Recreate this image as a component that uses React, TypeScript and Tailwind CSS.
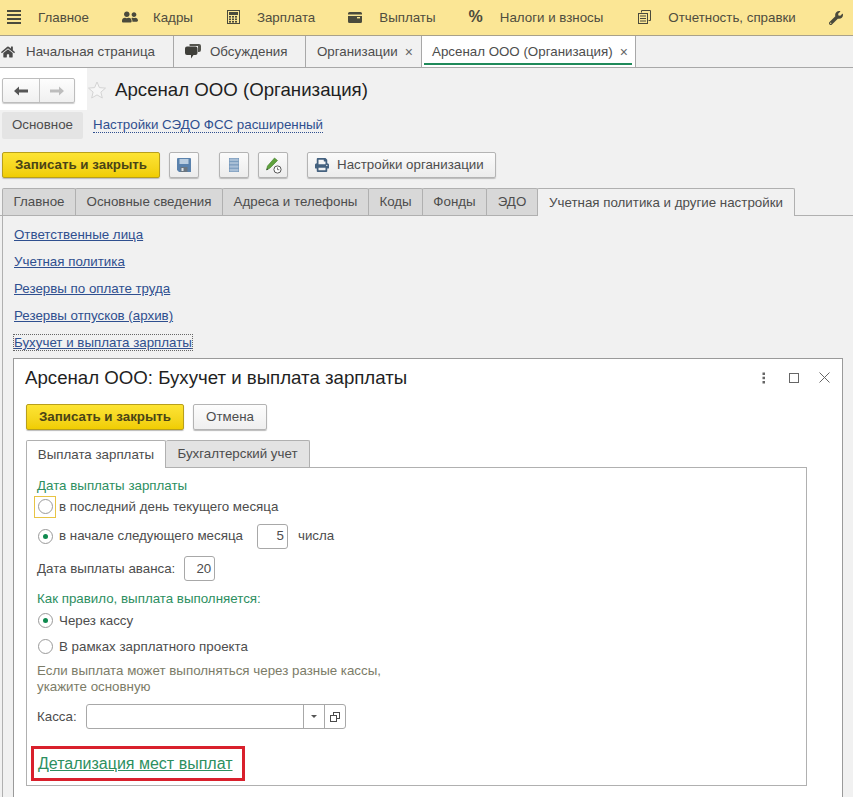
import { FaHome, FaPrint, FaUserFriends, FaWrench } from 'react-icons/fa';
import type { ReactNode } from 'react';

const MenuIcon = () => (
    <svg width="14" height="14" viewBox="0 0 14 14" fill="#4a4a3c">
        <rect x="0" y="0" width="14" height="2" />
        <rect x="0" y="4" width="14" height="2" />
        <rect x="0" y="8" width="14" height="2" />
        <rect x="0" y="12" width="14" height="2" />
    </svg>
);

const CalcIcon = () => (
    <svg width="13" height="14" viewBox="0 0 13 14">
        <rect x="0.5" y="0.5" width="12" height="13" fill="none" stroke="#4a4a3c" />
        <rect x="2" y="2" width="9" height="3" fill="#4a4a3c" />
        {[6, 8.5, 11].map((y) =>
            [2, 5, 8].map((x) => <rect key={`${x}-${y}`} x={x} y={y} width="2" height="1.6" fill="#4a4a3c" />)
        )}
    </svg>
);

const WalletIcon = () => (
    <svg width="14" height="11" viewBox="0 0 14 11" fill="#4a4a3c">
        <path d="M0 1.5 A1.5 1.5 0 0 1 1.5 0 H12.5 A1.5 1.5 0 0 1 14 1.5 V2.5 H0 Z" />
        <path d="M0 4 H14 V9.5 A1.5 1.5 0 0 1 12.5 11 H1.5 A1.5 1.5 0 0 1 0 9.5 Z" />
        <rect x="9" y="5" width="3" height="1.4" fill="#fbe695" />
    </svg>
);

const ReportsIcon = () => (
    <svg width="13" height="14" viewBox="0 0 13 14" fill="none" stroke="#4a4a3c">
        <path d="M3.5 2.5 V0.5 H12.5 V10.5 H10.5" />
        <rect x="0.5" y="3.5" width="9" height="10" />
        <path d="M2 6 H8 M2 8.5 H8 M2 11 H8" />
    </svg>
);

const ChatIcon = () => (
    <svg width="16" height="15" viewBox="0 0 16 15">
        <path d="M6 0 H14 A2 2 0 0 1 16 2 V6 A2 2 0 0 1 14 8 H13 V2 H5 A1 1 0 0 1 6 0 Z" fill="#55554f" />
        <path d="M2 2.5 H10.5 A2 2 0 0 1 12.5 4.5 V9 A2 2 0 0 1 10.5 11 H8.5 L6 14.5 V11 H2 A2 2 0 0 1 0 9 V4.5 A2 2 0 0 1 2 2.5 Z" fill="#3f3f3a" />
    </svg>
);

const SaveIcon = () => (
    <svg width="14" height="14" viewBox="0 0 14 14">
        <path d="M0 1 A1 1 0 0 1 1 0 H13 A1 1 0 0 1 14 1 V14 H2 L0 12 Z" fill="#5a82ad" />
        <rect x="2.5" y="1" width="9" height="5" fill="#b9cde0" />
        <rect x="3.5" y="9" width="7" height="5" fill="#6b7680" />
        <rect x="4.5" y="10" width="2" height="3" fill="#dfe5ea" />
    </svg>
);

const ListIcon = () => (
    <svg width="10" height="14" viewBox="0 0 10 14" fill="#a9bfd6" stroke="#6f93b8" strokeWidth="0.7">
        <rect x="0.3" y="0.3" width="9.4" height="3" />
        <rect x="0.3" y="3.7" width="9.4" height="3" />
        <rect x="0.3" y="7.1" width="9.4" height="3" />
        <rect x="0.3" y="10.5" width="9.4" height="3.2" />
    </svg>
);

const PencilClockIcon = () => (
    <svg width="17" height="17" viewBox="0 0 17 17">
        <path d="M9.5 1 L12.5 3.5 L5 11 L1.5 13 L2.5 9 Z" fill="#5fa23c" stroke="#3d7a26" strokeWidth="0.6" />
        <path d="M2 11.4 L1.5 13 L3.4 12.2 Z" fill="#333" />
        <circle cx="12.5" cy="12.5" r="3.6" fill="#fff" stroke="#555" />
        <path d="M12.5 10.5 V12.7 H14.3" fill="none" stroke="#555" strokeWidth="0.8" />
    </svg>
);

const SplitIcon = () => (
    <svg width="10" height="10" viewBox="0 0 10 10" fill="none" stroke="#4a4a4a">
        <rect x="3.5" y="0.5" width="6" height="6" />
        <rect x="0.5" y="3.5" width="6" height="6" fill="#fff" />
    </svg>
);

const NavItem = ({ icon, label, extra = '' }: { icon: ReactNode; label: string; extra?: string }) => (
    <div className={`flex items-center gap-[17px] pr-[33px] shrink-0 ${extra}`}>
        {icon}
        <span>{label}</span>
    </div>
);

const YellowButton = ({ width }: { width: string }) => (
    <button className={`${width} h-[26px] rounded-[2px] border border-[#b89f1c] bg-gradient-to-b from-[#fde433] to-[#f0cd00] font-bold text-[#4a4416] shadow-[0_1px_1px_#bbb]`}>
        Записать и закрыть
    </button>
);

const ToolButton = ({ children }: { children: ReactNode }) => (
    <button className="flex h-[26px] w-[30px] items-center justify-center rounded-[2px] border border-[#b4b4b4] bg-gradient-to-b from-[#fbfbfb] to-[#ececec] shadow-[0_1px_1px_#bbb]">
        {children}
    </button>
);

const Radio = ({ checked }: { checked?: boolean }) => (
    <span className="flex h-[15px] w-[15px] shrink-0 items-center justify-center rounded-full border border-[#9a9a9a] bg-white">
        {checked && <span className="h-[5px] w-[5px] rounded-full bg-[#0f8a4f]" />}
    </span>
);

const SmallInput = ({ value, width }: { value: string; width: string }) => (
    <div className={`${width} flex h-[25px] items-center justify-end rounded-[3px] border border-[#a8a8a8] bg-white pr-[3px]`}>{value}</div>
);

const App = () => {
    const mainTabs = [
        { label: 'Главное', w: 'w-[74px]' },
        { label: 'Основные сведения', w: 'w-[148px]' },
        { label: 'Адреса и телефоны', w: 'w-[147px]' },
        { label: 'Коды', w: 'w-[55px]' },
        { label: 'Фонды', w: 'w-[65px]' },
        { label: 'ЭДО', w: 'w-[52px]' },
    ];

    const links = ['Ответственные лица', 'Учетная политика', 'Резервы по оплате труда', 'Резервы отпусков (архив)'];

    return (
        <div className="h-[797px] w-[853px] overflow-hidden bg-[#f1f1f1] font-['Liberation_Sans',Arial,sans-serif] text-[13.33px] text-[#4d4d4d]">
            {/* Top section bar */}
            <div className="flex h-[36px] items-center overflow-hidden border-b border-[#a9a18a] bg-[#fbe695] pl-[7px] text-[#4f4d3f]">
                <NavItem icon={<MenuIcon />} label="Главное" />
                <NavItem icon={<FaUserFriends size={16} color="#4a4a3c" className="-mr-[2px]" />} label="Кадры" extra="mr-[1px]" />
                <NavItem icon={<CalcIcon />} label="Зарплата" />
                <NavItem icon={<WalletIcon />} label="Выплаты" />
                <NavItem icon={<span className="text-[16px] font-bold leading-none text-[#4a4a3c]">%</span>} label="Налоги и взносы" extra="mr-[2px]" />
                <NavItem icon={<ReportsIcon />} label="Отчетность, справки" />
                <FaWrench size={14} color="#4a4a3c" />
            </div>

            {/* Open windows */}
            <div className="flex h-[32px] border-b border-[#a8a8a8] bg-[#f1f1f1]">
                <div className="flex w-[174px] items-center border-r border-[#a8a8a8] pl-[1px]">
                    <FaHome size={14} color="#4a4a4a" />
                    <span className="ml-[11px]">Начальная страница</span>
                </div>
                <div className="flex w-[132px] items-center border-r border-[#a8a8a8] pl-[11px]">
                    <ChatIcon />
                    <span className="ml-[9px]">Обсуждения</span>
                </div>
                <div className="flex w-[116px] items-center border-r border-[#a8a8a8] pl-[11px]">
                    <span>Организации</span>
                    <span className="ml-[7px] text-[14px] leading-none text-[#666]">×</span>
                </div>
                <div className="relative flex w-[214px] items-center border-r border-[#a8a8a8] bg-white pl-[10px]">
                    <span>Арсенал ООО (Организация)</span>
                    <span className="ml-[7px] text-[14px] leading-none text-[#666]">×</span>
                    <div className="absolute bottom-[2px] left-[2px] right-[3px] h-[2px] bg-[#1f8a5a]" />
                </div>
            </div>

            {/* Form header */}
            <div className="flex h-[43px] items-start">
                <div className="flex h-[42px] w-[87px] shrink-0 items-start bg-white pl-[2px] pt-[10px]">
                    <div className="flex h-[25px] w-[73px] rounded-[2px] border border-[#bdbdbd] bg-gradient-to-b from-[#fdfdfd] to-[#f0f0f0] shadow-[0_1px_1px_#ccc]">
                        <div className="flex w-[37px] items-center justify-center border-r border-[#c4c4c4]">
                            <svg width="14" height="10" viewBox="0 0 14 10" fill="#555">
                                <path d="M0 5 L5 0.5 V3.5 H14 V6.5 H5 V9.5 Z" />
                            </svg>
                        </div>
                        <div className="flex flex-1 items-center justify-center">
                            <svg width="14" height="10" viewBox="0 0 14 10" fill="#bdbdbd">
                                <path d="M14 5 L9 0.5 V3.5 H0 V6.5 H9 V9.5 Z" />
                            </svg>
                        </div>
                    </div>
                </div>
                <svg className="mt-[12px]" width="20" height="20" viewBox="0 0 20 20" fill="#f6f6f6" stroke="#d4d4d4">
                    <path d="M10 2 L12.4 7.6 L18.5 8.1 L13.9 12.1 L15.3 18 L10 14.9 L4.7 18 L6.1 12.1 L1.5 8.1 L7.6 7.6 Z" />
                </svg>
                <h1 className="ml-[8px] mt-[9px] text-[18.67px] leading-[26px] text-[#1f1f1f]">Арсенал ООО (Организация)</h1>
            </div>

            {/* Form commands */}
            <div className="flex h-[28px] items-center pl-[2px]">
                <div className="flex h-[27px] w-[81px] items-center justify-center rounded-[2px] bg-[#e4e4e4]">Основное</div>
                <a className="ml-[10px] border-b border-dotted border-[#2f4f8f] leading-[15px] text-[#2f4f8f]">Настройки СЭДО ФСС расширенный</a>
            </div>

            <div className="mt-[13px] flex pl-[2px]">
                <YellowButton width="w-[158px]" />
                <div className="ml-[9px]"><ToolButton><SaveIcon /></ToolButton></div>
                <div className="ml-[20px]"><ToolButton><ListIcon /></ToolButton></div>
                <div className="ml-[9px]"><ToolButton><PencilClockIcon /></ToolButton></div>
                <button className="ml-[19px] flex h-[26px] w-[189px] items-center gap-[8px] rounded-[2px] border border-[#b4b4b4] bg-gradient-to-b from-[#fbfbfb] to-[#ececec] pl-[7px] shadow-[0_1px_1px_#bbb]">
                    <FaPrint size={14} color="#44617f" />
                    Настройки организации
                </button>
            </div>

            {/* Form tabs */}
            <div className="mt-[10px] flex h-[28px] border-b border-[#b0b0b0] pl-[2px]">
                {mainTabs.map((t) => (
                    <div key={t.label} className={`${t.w} flex h-[27px] items-center justify-center rounded-t-[2px] border border-b-0 border-[#b0b0b0] bg-[#d8d8d8] -mr-px`}>
                        {t.label}
                    </div>
                ))}
                <div className="relative flex h-[28px] w-[258px] items-center justify-center rounded-t-[2px] border border-b-0 border-[#b0b0b0] bg-[#f1f1f1]">
                    Учетная политика и другие настройки
                </div>
            </div>

            {/* Tab body */}
            <div className="ml-[2px] h-[600px] border-l border-[#b0b0b0]">
                <div className="flex flex-col items-start gap-[12px] pl-[11px] pt-[11px] text-[#2f4f8f]">
                    {links.map((l) => (
                        <a key={l} className="leading-[15px] underline">{l}</a>
                    ))}
                    <a className="leading-[15px] underline outline-1 outline-dotted outline-[#666]">Бухучет и выплата зарплаты</a>
                </div>

                {/* Dialog */}
                <div className="ml-[10px] mt-[8px] h-[460px] w-[830px] border border-[#9a9a9a] bg-white pl-[12px]">
                    <div className="flex h-[37px] items-center pr-[12px]">
                        <div className="-ml-[1px] text-[18.67px] text-[#1f1f1f]">Арсенал ООО: Бухучет и выплата зарплаты</div>
                        <div className="ml-auto flex items-center gap-[20px]">
                            <svg width="10" height="12" viewBox="0 0 10 12" fill="#666">
                                <rect x="3.5" y="0.5" width="2.5" height="2.5" />
                                <rect x="3.5" y="4.7" width="2.5" height="2.5" />
                                <rect x="3.5" y="9" width="2.5" height="2.5" />
                            </svg>
                            <svg width="10" height="10" viewBox="0 0 10 10" fill="none" stroke="#666">
                                <rect x="0.5" y="0.5" width="9" height="9" />
                            </svg>
                            <svg width="11" height="11" viewBox="0 0 11 11" fill="none" stroke="#666">
                                <path d="M0.5 0.5 L10.5 10.5 M10.5 0.5 L0.5 10.5" />
                            </svg>
                        </div>
                    </div>

                    <div className="mt-[8px] flex gap-[9px]">
                        <YellowButton width="w-[158px]" />
                        <button className="h-[26px] w-[74px] rounded-[2px] border border-[#b4b4b4] bg-gradient-to-b from-[#fdfdfd] to-[#efefef] shadow-[0_1px_1px_#bbb]">Отмена</button>
                    </div>

                    <div className="mt-[10px] flex h-[28px]">
                        <div className="z-10 flex h-[28px] w-[140px] items-center justify-center rounded-t-[2px] border border-b-0 border-[#b0b0b0] bg-white">Выплата зарплаты</div>
                        <div className="flex h-[27px] w-[144px] items-center justify-center rounded-t-[2px] border border-b-0 border-l-0 border-[#b0b0b0] bg-[#e3e3e3]">Бухгалтерский учет</div>
                    </div>

                    <div className="-mt-px h-[319px] w-[781px] border border-[#b0b0b0] pl-[10px] pt-[10px]">
                        <div className="h-[15px] leading-[15px] text-[#2d8f5f]">Дата выплаты зарплаты</div>

                        <div className="relative mt-[3px] flex h-[21px] items-center pl-[1px]">
                            <div className="absolute -left-[3px] top-0 h-[22px] w-[22px] border border-[#e8c445]" />
                            <Radio />
                            <span className="ml-[6px]">в последний день текущего месяца</span>
                        </div>

                        <div className="mt-[6px] flex h-[26px] items-center pl-[1px]">
                            <Radio checked />
                            <span className="ml-[6px]">в начале следующего месяца</span>
                            <div className="ml-[14px]"><SmallInput value="5" width="w-[31px]" /></div>
                            <span className="ml-[10px]">числа</span>
                        </div>

                        <div className="mt-[7px] flex h-[25px] items-center">
                            <span>Дата выплаты аванса:</span>
                            <div className="ml-[9px]"><SmallInput value="20" width="w-[31px]" /></div>
                        </div>

                        <div className="mt-[10px] h-[15px] leading-[15px] text-[#2d8f5f]">Как правило, выплата выполняется:</div>

                        <div className="mt-[6px] flex h-[17px] items-center pl-[1px]">
                            <Radio checked />
                            <span className="ml-[6px]">Через кассу</span>
                        </div>
                        <div className="mt-[9px] flex h-[17px] items-center pl-[1px]">
                            <Radio />
                            <span className="ml-[6px]">В рамках зарплатного проекта</span>
                        </div>

                        <div className="mt-[8px] leading-[16px] text-[#7c7c68]">
                            Если выплата может выполняться через разные кассы,<br />укажите основную
                        </div>

                        <div className="mt-[9px] flex h-[25px] items-center">
                            <span>Касса:</span>
                            <div className="ml-[9px] flex h-[25px] w-[260px] rounded-[3px] border border-[#a8a8a8] bg-white">
                                <div className="flex-1" />
                                <div className="flex w-[21px] items-center justify-center border-l border-[#a8a8a8]">
                                    <svg width="6" height="3" viewBox="0 0 6 3" fill="#555"><path d="M0 0 H6 L3 3 Z" /></svg>
                                </div>
                                <div className="flex w-[21px] items-center justify-center border-l border-[#a8a8a8]">
                                    <SplitIcon />
                                </div>
                            </div>
                        </div>

                        <div className="-ml-[6px] mt-[17px] flex h-[35px] w-[214px] items-center border-[3px] border-[#d9202c] pl-[4px] pt-[1px]">
                            <a className="text-[16px] text-[#2d8f5f] underline">Детализация мест выплат</a>
                        </div>
                    </div>
                </div>
            </div>
        </div>
    );
};

export default App;
